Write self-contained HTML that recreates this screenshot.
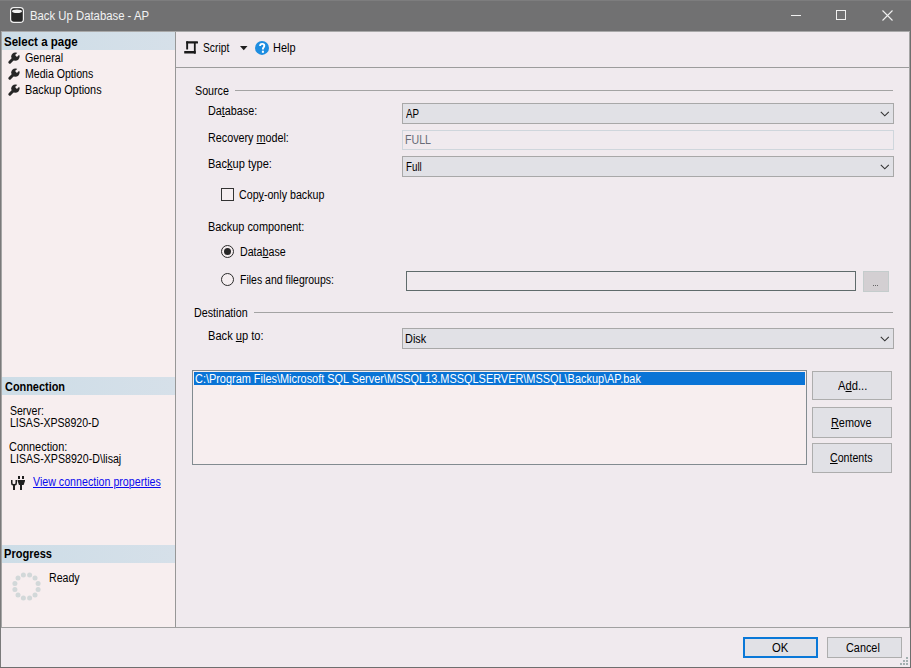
<!DOCTYPE html>
<html><head><meta charset="utf-8">
<style>
*{margin:0;padding:0;box-sizing:border-box}
html,body{width:911px;height:668px;overflow:hidden;background:#f0eaee}
body{position:relative;font-family:"Liberation Sans",sans-serif;font-size:11px;color:#000}
.a{position:absolute}
.t{position:absolute;white-space:nowrap;line-height:14px;transform-origin:0 0}
.ul{text-decoration:underline;text-decoration-thickness:1px;text-underline-offset:1px}
svg{position:absolute;overflow:visible}
</style></head><body>
<!-- title bar -->
<div class="a" style="left:0;top:0;width:911px;height:31px;background:#717172;border-top:1px solid #7d7d7e"></div>
<svg style="left:10px;top:7px" width="14" height="16" viewBox="0 0 14 16">
  <rect x="0.6" y="0.6" width="12.8" height="14.8" rx="3.2" fill="#262626" stroke="#f2f2f2" stroke-width="1.2"/>
  <ellipse cx="7" cy="4.3" rx="5" ry="1.8" fill="#f2f2f2"/>
</svg>
<div class="a" style="left:791px;top:15px;width:10px;height:1px;background:#f0f0f0"></div>
<div class="a" style="left:836px;top:10px;width:10px;height:10px;border:1px solid #f0f0f0"></div>
<svg style="left:882px;top:10px" width="11" height="11" viewBox="0 0 11 11"><path d="M0.5 0.5 L10.5 10.5 M10.5 0.5 L0.5 10.5" stroke="#f0f0f0" stroke-width="1.1"/></svg>

<div class="a" style="left:0;top:31px;width:911px;height:1px;background:#a8a8a8"></div>
<!-- window borders -->
<div class="a" style="left:0;top:31px;width:1px;height:637px;background:#7a7a7a"></div>
<div class="a" style="left:910px;top:31px;width:1px;height:637px;background:#6e6e6e"></div>
<div class="a" style="left:0;top:667px;width:911px;height:1px;background:#6e6e6e"></div>

<!-- left panel -->
<div class="a" style="left:1px;top:32px;width:174px;height:595px;background:#f7eeef;border-left:1px solid #a5a5a5"></div>
<div class="a" style="left:175px;top:32px;width:1px;height:595px;background:#979797"></div>
<div class="a" style="left:2px;top:32px;width:173px;height:18px;background:linear-gradient(to right,#cddde7,#d6e0e9)"></div>
<div class="a" style="left:2px;top:377px;width:173px;height:18px;background:linear-gradient(to right,#cddde7,#d6e0e9)"></div>
<div class="a" style="left:2px;top:545px;width:173px;height:18px;background:linear-gradient(to right,#cddde7,#d6e0e9)"></div>

<!-- wrench icons -->
<svg style="left:8px;top:52px" width="12" height="12" viewBox="0 0 12 12"><circle cx="7.4" cy="4.6" r="4.2" fill="#262626"/><line x1="6.2" y1="5.8" x2="1.8" y2="10.2" stroke="#262626" stroke-width="3" stroke-linecap="round"/><rect x="-1.3" y="-7" width="2.6" height="6.6" fill="#f7eeef" transform="translate(7.7 4.3) rotate(45)"/></svg>
<svg style="left:8px;top:68px" width="12" height="12" viewBox="0 0 12 12"><circle cx="7.4" cy="4.6" r="4.2" fill="#262626"/><line x1="6.2" y1="5.8" x2="1.8" y2="10.2" stroke="#262626" stroke-width="3" stroke-linecap="round"/><rect x="-1.3" y="-7" width="2.6" height="6.6" fill="#f7eeef" transform="translate(7.7 4.3) rotate(45)"/></svg>
<svg style="left:8px;top:84px" width="12" height="12" viewBox="0 0 12 12"><circle cx="7.4" cy="4.6" r="4.2" fill="#262626"/><line x1="6.2" y1="5.8" x2="1.8" y2="10.2" stroke="#262626" stroke-width="3" stroke-linecap="round"/><rect x="-1.3" y="-7" width="2.6" height="6.6" fill="#f7eeef" transform="translate(7.7 4.3) rotate(45)"/></svg>

<!-- plug icon -->
<svg style="left:10px;top:476px" width="16" height="15" viewBox="0 0 16 15">
  <g fill="#1e1e1e">
    <path d="M1 4 V7 Q1 9.5 3 9.5 V14 H5 V9.5 Q7 9.5 7 7 V4 H5.5 V7 Q5.5 8 4.5 8 H3.5 Q2.5 8 2.5 7 V4 Z"/>
    <rect x="8" y="0" width="2" height="3"/><rect x="12" y="0" width="2" height="3"/>
    <path d="M7.6 4 H15 V5 L13.6 9 H9 L7.6 5 Z"/><rect x="10" y="8.5" width="2" height="5.5"/>
  </g>
</svg>

<!-- spinner -->
<svg style="left:12px;top:572px" width="29" height="29" viewBox="-14.5 -14.5 29 29">
  <g fill="#d2d8d9">
    <circle cx="3.1" cy="-11.6" r="2.5"/><circle cx="8.5" cy="-8.5" r="2.5"/><circle cx="11.6" cy="-3.1" r="2.5"/>
    <circle cx="11.6" cy="3.1" r="2.5"/><circle cx="8.5" cy="8.5" r="2.5"/><circle cx="3.1" cy="11.6" r="2.5"/>
    <circle cx="-3.1" cy="11.6" r="2.5"/><circle cx="-8.5" cy="8.5" r="2.5"/><circle cx="-11.6" cy="3.1" r="2.5"/>
    <circle cx="-11.6" cy="-3.1" r="2.5"/><circle cx="-8.5" cy="-8.5" r="2.5"/><circle cx="-3.1" cy="-11.6" r="2.5"/>
  </g>
</svg>

<div class="a" style="left:909px;top:32px;width:1px;height:595px;background:#a5a5a5"></div>
<!-- main panel divider lines -->
<div class="a" style="left:176px;top:67px;width:733px;height:1px;background:#9c9c9c"></div>
<div class="a" style="left:1px;top:627px;width:909px;height:1px;background:#a0a0a0"></div>

<!-- toolbar icons -->
<svg style="left:182px;top:39px" width="18" height="18" viewBox="0 0 18 18"><g fill="#1a1a1a">
  <rect x="4.2" y="2.2" width="11.8" height="2.4" rx="0.6"/>
  <rect x="4.2" y="2.2" width="1.9" height="8.4" rx="0.5"/>
  <rect x="11.9" y="3" width="1.8" height="11.7"/>
  <rect x="2.2" y="12" width="11.5" height="2.6" rx="0.5"/>
</g></svg>
<svg style="left:240px;top:46px" width="8" height="5" viewBox="0 0 8 5"><path d="M0 0 H7.5 L3.75 4.2 Z" fill="#1e1e1e"/></svg>
<svg style="left:255px;top:41px" width="15" height="15" viewBox="0 0 15 15">
  <circle cx="7" cy="6.9" r="7" fill="#1d8de0"/>
  <path d="M5.1 5 C5.1 3.6 6 2.9 7.2 2.9 C8.4 2.9 9.3 3.7 9.3 4.8 C9.3 6.2 7.9 6.4 7.9 7.9 V8.4" fill="none" stroke="#fff" stroke-width="1.9"/>
  <rect x="6.9" y="9.7" width="2" height="2.1" fill="#fff"/>
</svg>

<!-- source group -->
<div class="a" style="left:235px;top:90px;width:658px;height:1px;background:#a3a3a3"></div>
<div class="a" style="left:402px;top:103px;width:492px;height:21px;background:#e1e1e6;border:1px solid #a8a8a8"></div>
<svg style="left:880px;top:111px" width="10" height="6" viewBox="0 0 10 6"><path d="M0.8 0.8 L4.8 4.8 L8.8 0.8" fill="none" stroke="#333" stroke-width="1.1"/></svg>
<div class="a" style="left:402px;top:130px;width:492px;height:20px;border:1px solid #cfd6dc"></div>
<div class="a" style="left:402px;top:156px;width:492px;height:21px;background:#e1e1e6;border:1px solid #a8a8a8"></div>
<svg style="left:880px;top:164px" width="10" height="6" viewBox="0 0 10 6"><path d="M0.8 0.8 L4.8 4.8 L8.8 0.8" fill="none" stroke="#333" stroke-width="1.1"/></svg>

<div class="a" style="left:221px;top:188px;width:13px;height:13px;border:1px solid #333;background:#f5eef0"></div>
<div class="a" style="left:221px;top:245px;width:13px;height:13px;border:1px solid #2a2a2a;border-radius:50%;background:#f5eef0"></div>
<div class="a" style="left:224px;top:248px;width:7px;height:7px;border-radius:50%;background:#262626"></div>
<div class="a" style="left:221px;top:273px;width:13px;height:13px;border:1px solid #2a2a2a;border-radius:50%;background:#f5eef0"></div>
<div class="a" style="left:406px;top:271px;width:450px;height:20px;border:1px solid #5f6b6b"></div>
<div class="a" style="left:863px;top:271px;width:26px;height:21px;background:#d3cfd2;border:1px solid #c4cccc"></div>
<div class="a" style="left:873px;top:285px;width:1px;height:1px;background:#666"></div>
<div class="a" style="left:875px;top:285px;width:1px;height:1px;background:#666"></div>
<div class="a" style="left:877px;top:285px;width:1px;height:1px;background:#666"></div>

<!-- destination group -->
<div class="a" style="left:254px;top:312px;width:639px;height:1px;background:#a3a3a3"></div>
<div class="a" style="left:402px;top:328px;width:492px;height:21px;background:#e1e1e6;border:1px solid #a8a8a8"></div>
<svg style="left:880px;top:336px" width="10" height="6" viewBox="0 0 10 6"><path d="M0.8 0.8 L4.8 4.8 L8.8 0.8" fill="none" stroke="#333" stroke-width="1.1"/></svg>

<div class="a" style="left:192px;top:370px;width:615px;height:95px;border:1px solid #828b90;background:#f7eeef"></div>
<div class="a" style="left:194px;top:372px;width:611px;height:13px;background:#0a74d6"></div>

<div class="a" style="left:812px;top:371px;width:80px;height:29px;background:#e1e1e6;border:1px solid #adadad"></div>
<div class="a" style="left:812px;top:407px;width:80px;height:31px;background:#e1e1e6;border:1px solid #adadad"></div>
<div class="a" style="left:812px;top:443px;width:80px;height:30px;background:#e1e1e6;border:1px solid #adadad"></div>

<!-- bottom buttons -->
<div class="a" style="left:743px;top:637px;width:75px;height:21px;background:#e1e1e6;border:2px solid #0a78d8"></div>
<div class="a" style="left:827px;top:637px;width:75px;height:21px;background:#e1e1e6;border:1px solid #adadad"></div>
<!-- grip -->
<div class="a" style="left:906px;top:657px;width:2px;height:2px;background:#a4b0b0"></div>
<div class="a" style="left:903px;top:660px;width:2px;height:2px;background:#a4b0b0"></div>
<div class="a" style="left:906px;top:660px;width:2px;height:2px;background:#a4b0b0"></div>
<div class="a" style="left:900px;top:663px;width:2px;height:2px;background:#a4b0b0"></div>
<div class="a" style="left:903px;top:663px;width:2px;height:2px;background:#a4b0b0"></div>
<div class="a" style="left:906px;top:663px;width:2px;height:2px;background:#a4b0b0"></div>

<div class="t" style="left:30.06px;top:9px;font-size:12px;transform:scaleX(0.9440);color:#f2f2f2">Back Up Database - AP</div>
<div class="t" style="left:4.04px;top:35px;font-size:12px;transform:scaleX(0.9600);color:#000;font-weight:bold">Select a page</div>
<div class="t" style="left:25.11px;top:51px;font-size:12px;transform:scaleX(0.8902);color:#000">General</div>
<div class="t" style="left:25.42px;top:67px;font-size:12px;transform:scaleX(0.8816);color:#000">Media Options</div>
<div class="t" style="left:25.40px;top:83px;font-size:12px;transform:scaleX(0.9036);color:#000">Backup Options</div>
<div class="t" style="left:202.54px;top:41px;font-size:12px;transform:scaleX(0.8567);color:#000">Script</div>
<div class="t" style="left:273.09px;top:41px;font-size:12px;transform:scaleX(0.9130);color:#000">Help</div>
<div class="t" style="left:194.61px;top:84px;font-size:12px;transform:scaleX(0.8919);color:#000">Source</div>
<div class="t" style="left:207.70px;top:104px;font-size:12px;transform:scaleX(0.9000);color:#000">Da<span class="ul">t</span>abase:</div>
<div class="t" style="left:207.70px;top:131px;font-size:12px;transform:scaleX(0.8977);color:#000">Recovery <span class="ul">m</span>odel:</div>
<div class="t" style="left:207.68px;top:157px;font-size:12px;transform:scaleX(0.9209);color:#000">Bac<span class="ul">k</span>up type:</div>
<div class="t" style="left:406.00px;top:107px;font-size:12px;transform:scaleX(0.8125);color:#000">AP</div>
<div class="t" style="left:404.81px;top:133px;font-size:12px;transform:scaleX(0.8857);color:#686c78">FULL</div>
<div class="t" style="left:405.78px;top:160px;font-size:12px;transform:scaleX(0.8167);color:#000">Full</div>
<div class="t" style="left:238.81px;top:188px;font-size:12px;transform:scaleX(0.8884);color:#000">Cop<span class="ul">y</span>-only backup</div>
<div class="t" style="left:207.89px;top:220px;font-size:12px;transform:scaleX(0.9087);color:#000">Backup component:</div>
<div class="t" style="left:239.91px;top:245px;font-size:12px;transform:scaleX(0.8880);color:#000">Data<span class="ul">b</span>ase</div>
<div class="t" style="left:239.93px;top:273px;font-size:12px;transform:scaleX(0.8743);color:#000">Files and file<span class="ul">g</span>roups:</div>
<div class="t" style="left:194.41px;top:306px;font-size:12px;transform:scaleX(0.8931);color:#000">Destination</div>
<div class="t" style="left:207.77px;top:329px;font-size:12px;transform:scaleX(0.9259);color:#000">Back <span class="ul">u</span>p to:</div>
<div class="t" style="left:405.29px;top:332px;font-size:12px;transform:scaleX(0.9091);color:#000">Disk</div>
<div class="t" style="left:195.09px;top:372px;font-size:12px;transform:scaleX(0.9100);color:#fff">C:\Program Files\Microsoft SQL Server\MSSQL13.MSSQLSERVER\MSSQL\Backup\AP.bak</div>
<div class="t" style="left:838.00px;top:379px;font-size:12px;transform:scaleX(0.9333);color:#000">A<span class="ul">d</span>d...</div>
<div class="t" style="left:831.29px;top:416px;font-size:12px;transform:scaleX(0.9070);color:#000"><span class="ul">R</span>emove</div>
<div class="t" style="left:829.71px;top:451px;font-size:12px;transform:scaleX(0.8851);color:#000"><span class="ul">C</span>ontents</div>
<div class="t" style="left:771.50px;top:641px;font-size:12px;transform:scaleX(0.9412);color:#000">OK</div>
<div class="t" style="left:845.69px;top:641px;font-size:12px;transform:scaleX(0.9056);color:#000">Cancel</div>
<div class="t" style="left:5.00px;top:380px;font-size:12px;transform:scaleX(0.9091);color:#000;font-weight:bold">Connection</div>
<div class="t" style="left:9.82px;top:404px;font-size:12px;transform:scaleX(0.8757);color:#000">Server:</div>
<div class="t" style="left:9.82px;top:416px;font-size:12px;transform:scaleX(0.8800);color:#000">LISAS-XPS8920-D</div>
<div class="t" style="left:9.09px;top:440px;font-size:12px;transform:scaleX(0.9097);color:#000">Connection:</div>
<div class="t" style="left:9.81px;top:452px;font-size:12px;transform:scaleX(0.8871);color:#000">LISAS-XPS8920-D\lisaj</div>
<div class="t" style="left:33.20px;top:475px;font-size:12px;transform:scaleX(0.8881);color:#0a0aee"><span class="ul">View connection properties</span></div>
<div class="t" style="left:4.08px;top:547px;font-size:12px;transform:scaleX(0.9216);color:#000;font-weight:bold">Progress</div>
<div class="t" style="left:48.52px;top:571px;font-size:12px;transform:scaleX(0.8824);color:#000">Ready</div>
</body></html>
